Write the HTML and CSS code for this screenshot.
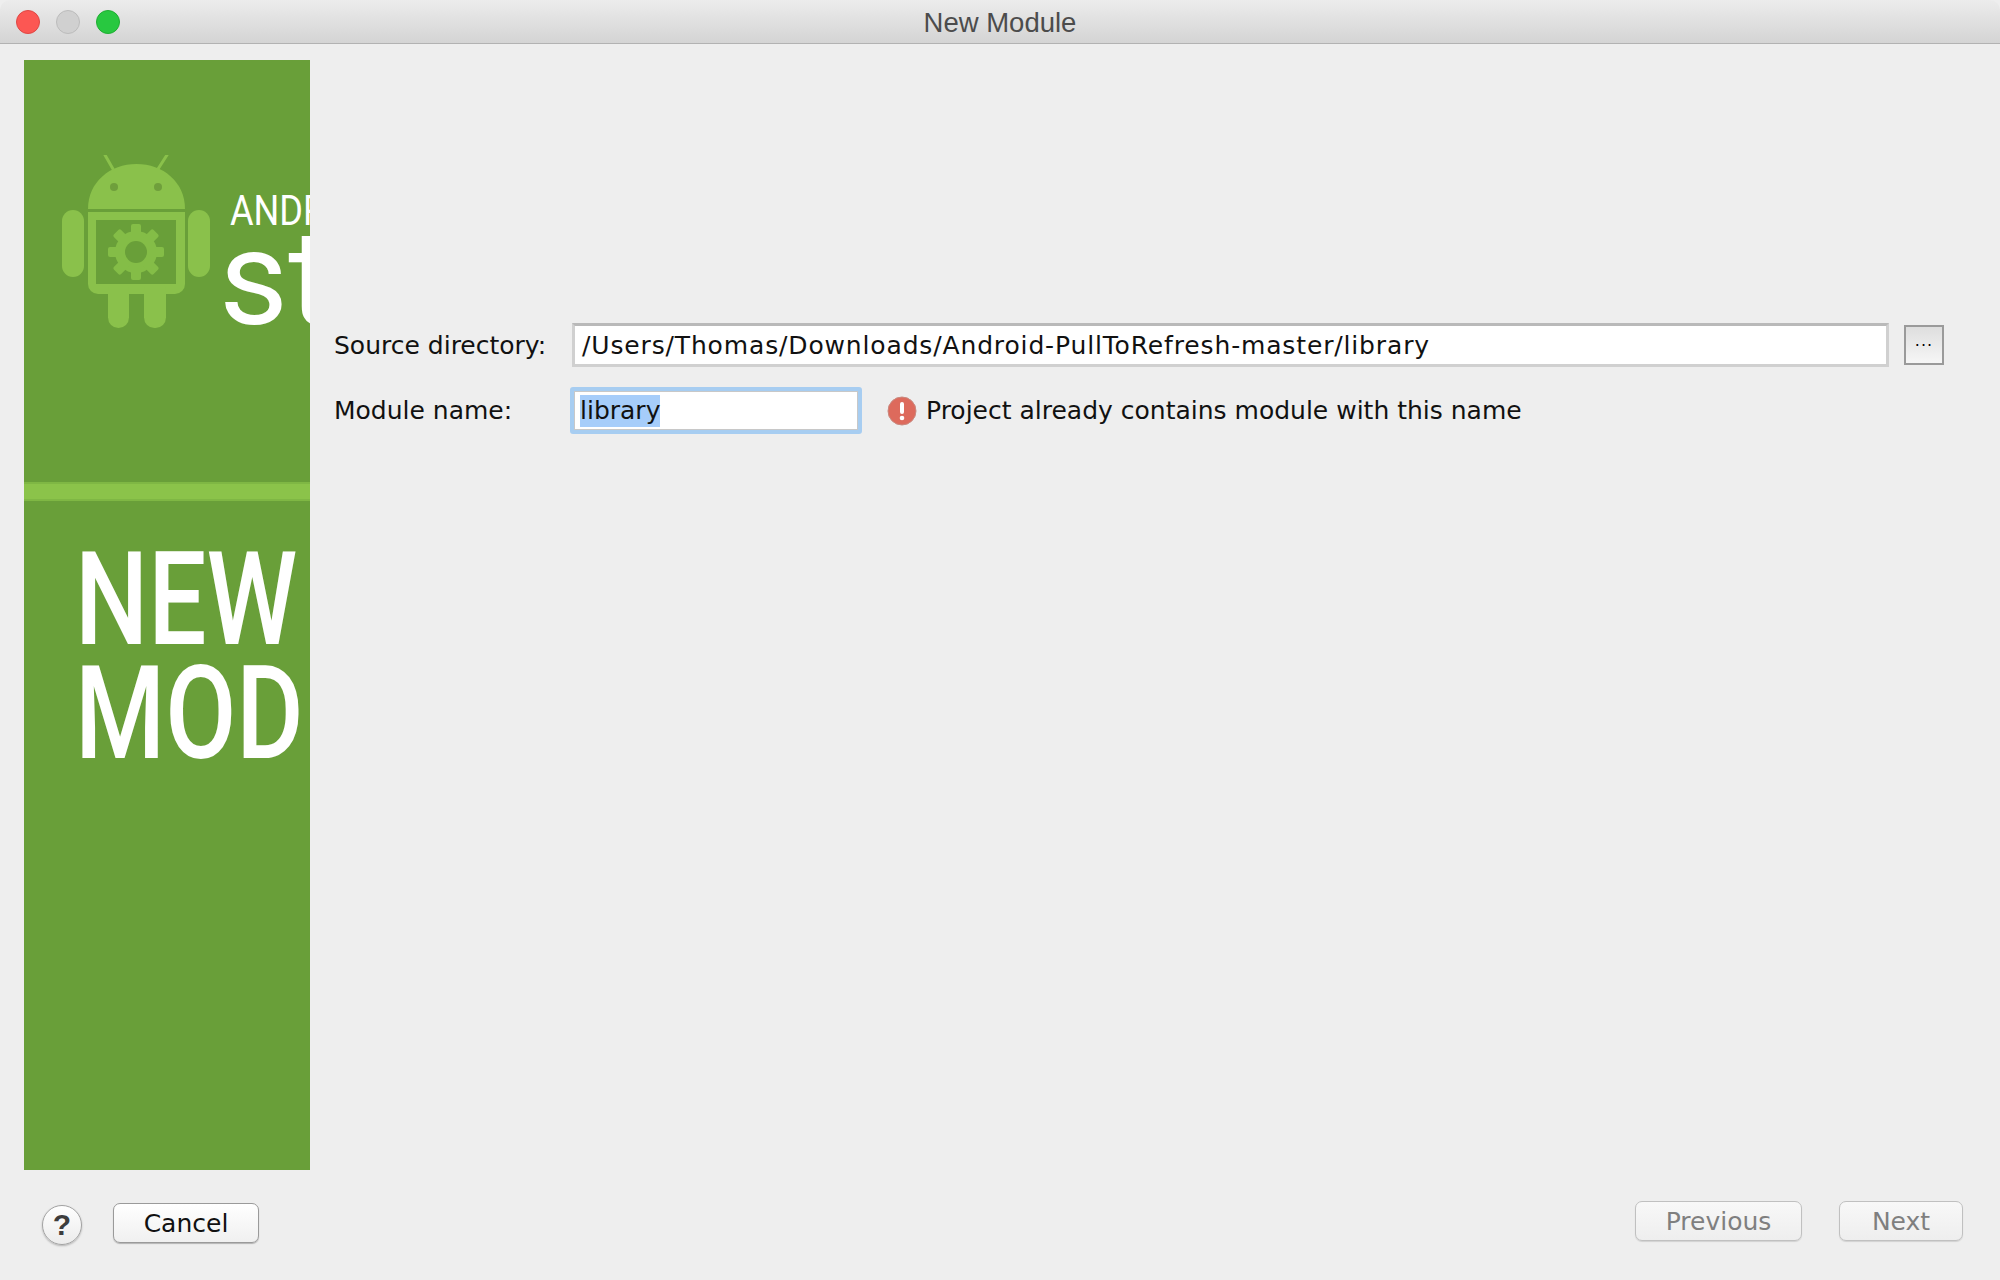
FILE: index.html
```html
<!DOCTYPE html>
<html lang="en">
<head>
<meta charset="utf-8">
<title>New Module</title>
<link rel="stylesheet" href="styles.css">
</head>
<body>
<div class="window">
  <header class="titlebar">
    <div class="lights">
      <span class="light light-close"></span>
      <span class="light light-min"></span>
      <span class="light light-max"></span>
    </div>
    <div class="title">New Module</div>
  </header>
  <main class="content">
    <aside class="banner">
      <div class="brand">
        <svg class="android" viewBox="0 0 148 173" width="148" height="173" aria-hidden="true">
          <g fill="#8ac14b">
            <path d="M43 0 L51 14 M105 0 L96 14" stroke="#8ac14b" stroke-width="3" stroke-linecap="round"/>
            <path d="M26 54 C26 27 48 9 74.500 9 C101 9 123 27 123 54 Z"/>
            <path d="M26 57 H123 V129 A10 10 0 0 1 113 139 H36 A10 10 0 0 1 26 129 Z"/>
            <rect x="0" y="55" width="22" height="67" rx="11"/>
            <rect x="126" y="55" width="22" height="67" rx="11"/>
            <rect x="46" y="125" width="21" height="48" rx="10.500"/>
            <rect x="82" y="125" width="22" height="48" rx="10.500"/>
          </g>
          <circle cx="52" cy="32" r="4" fill="#6f9f3c"/>
          <circle cx="96" cy="32" r="4" fill="#6f9f3c"/>
          <rect x="34" y="65" width="80" height="64" fill="#699f39"/>
          <g fill="#84bd47">
            <circle cx="74" cy="97" r="21"/>
            <rect x="69" y="69" width="10" height="56" rx="2"/>
            <rect x="69" y="69" width="10" height="56" rx="2" transform="rotate(45 74 97)"/>
            <rect x="69" y="69" width="10" height="56" rx="2" transform="rotate(90 74 97)"/>
            <rect x="69" y="69" width="10" height="56" rx="2" transform="rotate(135 74 97)"/>
          </g>
          <circle cx="74" cy="97" r="11" fill="#699f39"/>
        </svg>
        <div class="wordmark">
          <div class="wordmark-top">ANDROID</div>
          <div class="wordmark-main">studio</div>
        </div>
      </div>
      <div class="band"></div>
      <div class="heading">
        <div class="heading-line">NEW</div>
        <div class="heading-line">MODULE</div>
      </div>
    </aside>
    <section class="form">
      <div class="row row-source">
        <label class="label">Source directory:</label>
        <div class="field field-source">/Users/Thomas/Downloads/Android-PullToRefresh-master/library</div>
        <button class="browse" type="button">...</button>
      </div>
      <div class="row row-module">
        <label class="label">Module name:</label>
        <div class="field field-module"><span class="selected">library</span></div>
        <svg class="error-icon" viewBox="0 0 30 30" width="30" height="30" aria-hidden="true">
          <circle cx="15" cy="15" r="14" fill="#dd6a5c" stroke="#c9897f" stroke-width="1"/>
          <rect x="13" y="6" width="4" height="12" rx="2" fill="#fff"/>
          <circle cx="15" cy="22" r="2.300" fill="#fff"/>
        </svg>
        <span class="error-text">Project already contains module with this name</span>
      </div>
    </section>
  </main>
  <footer class="footer">
    <div class="footer-left">
      <button class="help" type="button">?</button>
      <button class="btn btn-cancel" type="button">Cancel</button>
    </div>
    <div class="footer-right">
      <button class="btn btn-off btn-prev" type="button">Previous</button>
      <button class="btn btn-off btn-next" type="button">Next</button>
    </div>
  </footer>
</div>
</body>
</html>
```
FILE: styles.css
```css
* { box-sizing: border-box; }
html, body { margin: 0; padding: 0; }
body {
  width: 2000px;
  height: 1280px;
  overflow: hidden;
  background: #eeeeee;
  font-family: "DejaVu Sans", sans-serif;
  color: #111;
}
.window {
  width: 2000px;
  height: 1280px;
  display: flex;
  flex-direction: column;
}
.titlebar {
  height: 44px;
  flex: none;
  display: flex;
  align-items: center;
  justify-content: center;
  padding-top: 2px;
  position: relative;
  border-top-left-radius: 10px;
  border-top-right-radius: 10px;
  border-bottom: 1px solid #b2b2b2;
  background: linear-gradient(#ececec, #d4d4d4);
}
.lights {
  position: absolute;
  left: 16px;
  top: 10px;
  display: flex;
  gap: 16px;
}
.light {
  width: 24px;
  height: 24px;
  border-radius: 50%;
  border: 1px solid;
}
.light-close { background: #fc5753; border-color: #df4744; }
.light-min { background: #d0d0d0; border-color: #bcbcbc; }
.light-max { background: #28c840; border-color: #1fae32; }
.title {
  font-family: "Liberation Sans", sans-serif;
  font-size: 27.500px;
  color: #4c4c4c;
}
.content {
  flex: 1;
  min-height: 0;
  display: flex;
  padding: 16px 0 0 24px;
}
.banner {
  width: 286px;
  height: 1110px;
  flex: none;
  overflow: hidden;
  background: #699f39;
  color: #fff;
  font-family: Roboto, sans-serif;
}
.brand {
  height: 422px;
  padding: 95px 0 0 38px;
  display: flex;
  gap: 14px;
  white-space: nowrap;
}
.android { flex: none; }
.wordmark { padding-top: 34px; }
.wordmark-top {
  font-size: 42px;
  line-height: 44px;
  margin-left: 6px;
  transform: scaleX(0.86);
  transform-origin: left center;
}
.wordmark-main {
  font-size: 134px;
  line-height: 104px;
  margin-left: -5px;
  margin-top: -6px;
}
.band {
  height: 19px;
  background: #8bc34a;
  border-top: 2px solid #7fb744;
  border-bottom: 2px solid #7fb744;
}
.heading {
  padding: 42px 0 0 51px;
  white-space: nowrap;
}
.heading-line {
  font-size: 129px;
  font-weight: 500;
  line-height: 114px;
  transform: scaleX(0.80);
  transform-origin: left center;
}
.form {
  flex: 1;
  min-width: 0;
  padding: 263px 56px 0 24px;
  font-size: 25px;
}
.row { display: flex; align-items: center; }
.row-source { height: 44px; }
.row-module { height: 47px; margin-top: 20px; }
.label {
  flex: none;
  width: 238px;
}
.field {
  background: #fff;
  display: flex;
  align-items: center;
}
.field-source {
  width: 1317px;
  height: 44px;
  padding-left: 7px;
  border: 3px solid #d0d0d0;
  border-top-color: #b9b9b9;
  letter-spacing: 0.850px;
  white-space: nowrap;
}
.browse {
  flex: none;
  width: 40px;
  height: 40px;
  margin-left: 15px;
  padding: 0 0 8px;
  border: 2px solid #9a9a9a;
  background: linear-gradient(#dedede, #f6f6f6);
  font: 16px/1 "DejaVu Sans", sans-serif;
  letter-spacing: 1px;
  color: #000;
}
.field-module {
  width: 292px;
  height: 47px;
  margin-left: -2px;
  padding-left: 6px;
  border: 4px solid #a7cdf1;
  border-radius: 3px;
  box-shadow: inset 0 0 0 1px #c8c8c8;
}
.selected {
  display: block;
  height: 32px;
  line-height: 32px;
  background: #a6cdfa;
}
.error-icon { flex: none; margin-left: 25px; }
.error-text {
  margin-left: 9px;
  white-space: nowrap;
}
.footer {
  flex: none;
  height: 110px;
  display: flex;
  justify-content: space-between;
  padding: 31px 37px 0 42px;
}
.footer-left { display: flex; align-items: flex-start; }
.footer-right { display: flex; gap: 37px; }
.help {
  width: 40px;
  height: 40px;
  margin-top: 4px;
  padding: 0;
  border-radius: 50%;
  border: 1px solid #a2a2a2;
  background: linear-gradient(#fff, #ececec);
  box-shadow: 0 1px 2px rgba(0, 0, 0, 0.25);
  font: bold 30px/1 "Liberation Sans", sans-serif;
  color: #3d3d3d;
}
.btn {
  height: 40px;
  padding: 0;
  border: 1px solid #a9a9a9;
  border-radius: 7px;
  background: linear-gradient(#ffffff, #f0f0f0);
  font: 25px/1 "DejaVu Sans", sans-serif;
  color: #111;
}
.btn-cancel {
  width: 146px;
  margin-left: 31px;
  margin-top: 2px;
  border-color: #9a9a9a;
  box-shadow: 0 1px 1px rgba(0, 0, 0, 0.25);
}
.btn-off {
  color: #7f7f7f;
  border-color: #c0c0c0;
  background: linear-gradient(#f8f8f8, #eeeeee);
  box-shadow: 0 1px 1px rgba(0, 0, 0, 0.12);
}
.btn-prev { width: 167px; }
.btn-next { width: 124px; }
```
